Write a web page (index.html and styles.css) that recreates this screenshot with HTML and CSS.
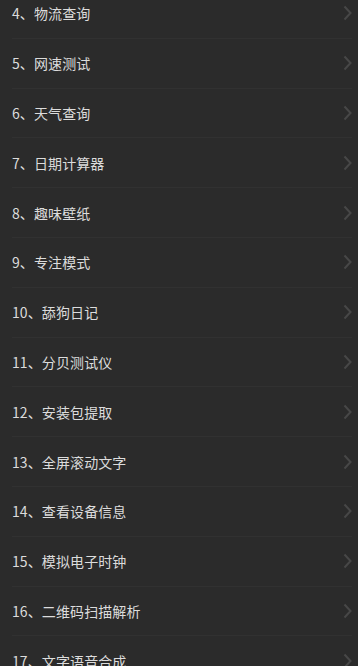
FILE: index.html
```html
<!DOCTYPE html>
<html lang="zh">
<head>
<meta charset="utf-8">
<link rel="stylesheet" href="styles.css">
</head>
<body>
<ul class="list">
  <li class="row"><span class="label">4、物流查询</span><svg class="chev" viewBox="0 0 9 16"><polyline points="1.5,1.5 7.5,8 1.5,14.5"/></svg></li>
  <li class="row"><span class="label">5、网速测试</span><svg class="chev" viewBox="0 0 9 16"><polyline points="1.5,1.5 7.5,8 1.5,14.5"/></svg></li>
  <li class="row"><span class="label">6、天气查询</span><svg class="chev" viewBox="0 0 9 16"><polyline points="1.5,1.5 7.5,8 1.5,14.5"/></svg></li>
  <li class="row"><span class="label">7、日期计算器</span><svg class="chev" viewBox="0 0 9 16"><polyline points="1.5,1.5 7.5,8 1.5,14.5"/></svg></li>
  <li class="row"><span class="label">8、趣味壁纸</span><svg class="chev" viewBox="0 0 9 16"><polyline points="1.5,1.5 7.5,8 1.5,14.5"/></svg></li>
  <li class="row"><span class="label">9、专注模式</span><svg class="chev" viewBox="0 0 9 16"><polyline points="1.5,1.5 7.5,8 1.5,14.5"/></svg></li>
  <li class="row"><span class="label">10、舔狗日记</span><svg class="chev" viewBox="0 0 9 16"><polyline points="1.5,1.5 7.5,8 1.5,14.5"/></svg></li>
  <li class="row"><span class="label">11、分贝测试仪</span><svg class="chev" viewBox="0 0 9 16"><polyline points="1.5,1.5 7.5,8 1.5,14.5"/></svg></li>
  <li class="row"><span class="label">12、安装包提取</span><svg class="chev" viewBox="0 0 9 16"><polyline points="1.5,1.5 7.5,8 1.5,14.5"/></svg></li>
  <li class="row"><span class="label">13、全屏滚动文字</span><svg class="chev" viewBox="0 0 9 16"><polyline points="1.5,1.5 7.5,8 1.5,14.5"/></svg></li>
  <li class="row"><span class="label">14、查看设备信息</span><svg class="chev" viewBox="0 0 9 16"><polyline points="1.5,1.5 7.5,8 1.5,14.5"/></svg></li>
  <li class="row"><span class="label">15、模拟电子时钟</span><svg class="chev" viewBox="0 0 9 16"><polyline points="1.5,1.5 7.5,8 1.5,14.5"/></svg></li>
  <li class="row"><span class="label">16、二维码扫描解析</span><svg class="chev" viewBox="0 0 9 16"><polyline points="1.5,1.5 7.5,8 1.5,14.5"/></svg></li>
  <li class="row"><span class="label">17、文字语音合成</span><svg class="chev" viewBox="0 0 9 16"><polyline points="1.5,1.5 7.5,8 1.5,14.5"/></svg></li>
</ul>
</body>
</html>
```
FILE: styles.css
```css
html, body {
  margin: 0;
  padding: 0;
  background: #2b2b2b;
  overflow: hidden;
  height: 666px;
}
body {
  font-family: "Noto Sans CJK SC", "Noto Sans", sans-serif;
  color: #dcdcdc;
}
.list {
  list-style: none;
  margin: -11px 0 0 0;
  padding: 0;
}
.row {
  height: 48.8px;
  display: flex;
  align-items: center;
  justify-content: space-between;
  margin: 0 6px 0 12px;
  border-bottom: 1px solid #313131;
}
.label {
  font-size: 14px;
  line-height: 20px;
  letter-spacing: 0.1px;
}
.chev {
  width: 9px;
  height: 16px;
  fill: none;
  stroke: #474747;
  stroke-width: 2;
}
```
